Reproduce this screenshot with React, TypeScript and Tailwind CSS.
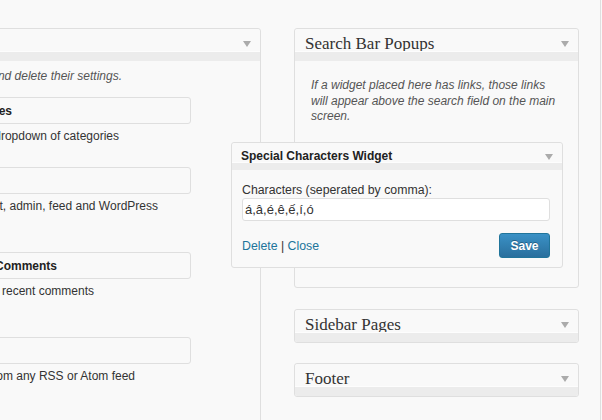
import React from "react";

const Arrow = ({ className }: { className: string }) => (
  <svg className={className} width="8" height="6" viewBox="0 0 8 6">
    <path d="M0 0 H8 L4 6 Z" fill="#ababab" />
  </svg>
);

const PanelHeader = ({ title, h }: { title: string; h: string }) => (
  <div className="relative">
    <div className={`${h} overflow-hidden bg-[#f9f9f9] rounded-t-[3px] pl-[10px] pt-[6px]`}>
      <div className="font-['Liberation_Serif','Times_New_Roman',serif] text-[17px] leading-[17px] text-[#333] whitespace-nowrap">
        {title}
      </div>
    </div>
    <div className="h-[10px] border-t border-[#fdfdfd] bg-[#ececec]" />
    <Arrow className="absolute right-[9px] top-[12px]" />
  </div>
);

const WidgetBox = ({ title, titleEnd, mt }: { title: string; titleEnd: string; mt: string }) => (
  <div className={`${mt} ml-[-80px] w-[271px] h-[27px] border border-[#dfdfdf] rounded-[3px] bg-[#f9f9f9] flex items-center`}>
    <div className={`${titleEnd} flex justify-end whitespace-nowrap font-bold text-[12px] text-[#222]`}>{title}</div>
  </div>
);

const Desc = ({ text, end }: { text: string; end: string }) => (
  <div className={`${end} mt-[4px] flex justify-end whitespace-nowrap text-[12px] leading-[16px] text-[#333]`}>{text}</div>
);

export default function App() {
  return (
    <div className="relative w-[602px] h-[420px] overflow-hidden bg-[#f9f9f9] font-['Liberation_Sans',Arial,sans-serif] text-[#333]">
      <div className="flex h-full">
        {/* Left panel (Available Widgets) */}
        <div className="flex-none mt-[28px] ml-[-139px] w-[400px] h-[420px] border border-[#dfdfdf] rounded-t-[3px] bg-[#f9f9f9]">
          <PanelHeader title="Available Widgets" h="h-[22px]" />
          <div className="ml-[138px] pt-[7px]">
            <div className="w-[122px] flex justify-end whitespace-nowrap italic text-[12px] leading-[16px] text-[#555]">
              Drag widgets back here to deactivate them and delete their settings.
            </div>
            <WidgetBox title="Categories" titleEnd="w-[91px]" mt="mt-[13px]" />
            <Desc text="A list or dropdown of categories" end="w-[119px]" />
            <WidgetBox title="Meta" titleEnd="w-[50px]" mt="mt-[23px]" />
            <Desc text="Log in/out, admin, feed and WordPress" end="w-[158px]" />
            <WidgetBox title="Recent Comments" titleEnd="w-[136px]" mt="mt-[38px]" />
            <Desc text="The most recent comments" end="w-[94px]" />
            <WidgetBox title="RSS" titleEnd="w-[50px]" mt="mt-[38px]" />
            <Desc text="Entries from any RSS or Atom feed" end="w-[135px]" />
          </div>
        </div>

        {/* Right column (sidebars) */}
        <div className="flex-none ml-[33px] w-[285px] mt-[28px] flex flex-col">
          <div className="border border-[#dfdfdf] rounded-[3px] bg-[#f9f9f9]">
            <PanelHeader title="Search Bar Popups" h="h-[22px]" />
            <div className="h-[226px] pl-[16px] pt-[17px] italic text-[12px] leading-[15.5px] text-[#555] whitespace-nowrap">
              If a widget placed here has links, those links
              <br />
              will appear above the search field on the main
              <br />
              screen.
            </div>
          </div>
          <div className="mt-[21px] border border-[#dfdfdf] rounded-[3px] bg-[#f9f9f9] overflow-hidden">
            <PanelHeader title="Sidebar Pages" h="h-[22px]" />
          </div>
          <div className="mt-[20px] border border-[#dfdfdf] rounded-[3px] bg-[#f9f9f9] overflow-hidden">
            <PanelHeader title="Footer" h="h-[22px]" />
          </div>
        </div>

        <div className="flex-none ml-[21px] w-[10px] h-full border-l border-[#dfdfdf]" />
      </div>

      {/* Expanded widget popup */}
      <div className="absolute left-[231px] top-[142px] w-[332px] border border-[#dfdfdf] rounded-[3px] bg-[#f9f9f9]">
        <div className="relative">
          <div className="h-[19px] pl-[9px] pt-[7px] rounded-t-[3px] bg-[#f9f9f9]">
            <div className="font-bold text-[12px] leading-[12px] text-[#222] whitespace-nowrap">Special Characters Widget</div>
          </div>
          <div className="h-[8px] border-t border-[#fdfdfd] bg-[#ececec]" />
          <Arrow className="absolute right-[9px] top-[11px]" />
        </div>
        <div className="pl-[10px] pr-[12px] pt-[12px] pb-[9px] text-[12.3px]">
          <div className="leading-[16px] text-[#333]">Characters (seperated by comma):</div>
          <div className="h-[23px] w-full border border-[#dfdfdf] rounded-[3px] bg-white flex items-center pl-[2px] text-[13px] text-[#333]">
            á,â,é,ê,ế,í,ó
          </div>
          <div className="mt-[12px] flex items-center justify-between">
            <div className="text-[12.3px] leading-[16px]">
              <span className="text-[#21759b]">Delete</span>
              <span className="text-[#333]"> | </span>
              <span className="text-[#21759b]">Close</span>
            </div>
            <div className="w-[51px] h-[25px] rounded-[3px] border border-[#21759b] bg-linear-to-b from-[#3a91c6] to-[#2a6f9d] flex items-center justify-center text-white font-bold text-[12px] [text-shadow:0_-1px_0_rgba(0,0,0,0.3)]">
              Save
            </div>
          </div>
        </div>
      </div>
    </div>
  );
}
